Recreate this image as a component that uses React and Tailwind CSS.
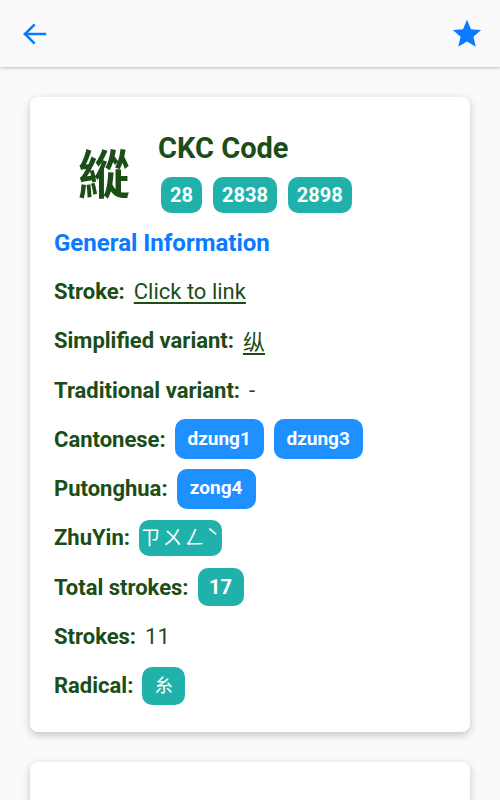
const font = { fontFamily: "Roboto, 'Noto Sans CJK TC', sans-serif" };

function Badge({ children, color = "teal", className = "" }) {
  const bg = color === "blue" ? "bg-[#1e90ff]" : "bg-[#20b2aa]";
  return (
    <span
      className={`inline-flex items-center justify-center whitespace-nowrap rounded-[10px] font-bold text-white ${bg} ${className}`}
    >
      {children}
    </span>
  );
}

function Row({ label, children }) {
  return (
    <div className="flex h-[49.25px] items-center">
      <span className="whitespace-nowrap text-[22px] font-bold text-[#1b4d16]">{label}</span>
      <div className="ml-[9px] flex items-center gap-[10px]">{children}</div>
    </div>
  );
}

export default function App() {
  return (
    <div className="min-h-[800px] bg-[#fafafa]" style={font}>
      <header className="flex h-[67px] items-center justify-between bg-[#fafafa] px-[20px] shadow-[0_1px_3px_rgba(0,0,0,0.25)]">
        <svg width="30" height="30" viewBox="0 0 24 24" fill="none" stroke="#0a7aff" strokeWidth="2" strokeLinecap="square">
          <path d="M20 12H4" />
          <path d="M11 5l-7 7 7 7" />
        </svg>
        <svg width="34" height="34" viewBox="0 0 24 24" fill="#0a7aff" className="-mr-[4px]">
          <path d="M12 17.27L18.18 21l-1.64-7.03L22 9.24l-7.19-.61L12 2 9.19 8.63 2 9.24l5.46 4.73L5.82 21z" />
        </svg>
      </header>

      <main className="px-[30px] pt-[30px]">
        <section className="rounded-[8px] bg-white px-[24px] pb-[22px] pt-[33px] shadow-[0_3px_8px_rgba(0,0,0,0.22)]">
          <div className="flex items-center">
            <div className="flex w-[100px] justify-center">
              <span
                className="text-[52px] font-bold leading-none text-[#1b4d16]"
                style={{ fontFamily: "'Noto Sans CJK TC', sans-serif" }}
              >
                縱
              </span>
            </div>
            <div className="ml-[4px] flex flex-col">
              <h1 className="h-[36px] text-[29px] font-bold leading-[36px] text-[#1b4d16]">CKC Code</h1>
              <div className="ml-[3px] mt-[11px] flex gap-[11px]">
                <Badge className="h-[36px] px-[9px] text-[20px]">28</Badge>
                <Badge className="h-[36px] px-[9px] text-[20px]">2838</Badge>
                <Badge className="h-[36px] px-[9px] text-[20px]">2898</Badge>
              </div>
            </div>
          </div>

          <h2 className="mt-[15px] h-[30px] text-[24px] font-bold leading-[30px] text-[#0a7aff]">
            General Information
          </h2>

          <div className="mt-[9px]">
            <Row label="Stroke:">
              <span className="text-[22px] text-[#1b4d16] underline underline-offset-[3px]">Click to link</span>
            </Row>
            <Row label="Simplified variant:">
              <span
                className="text-[22px] text-[#1b4d16] underline underline-offset-[3px]"
                style={{ fontFamily: "'Noto Sans CJK SC', sans-serif" }}
              >
                纵
              </span>
            </Row>
            <Row label="Traditional variant:">
              <span className="text-[22px] text-[#1b4d16]">-</span>
            </Row>
            <Row label="Cantonese:">
              <Badge color="blue" className="h-[40px] w-[89px] text-[19px]">dzung1</Badge>
              <Badge color="blue" className="h-[40px] w-[89px] text-[19px]">dzung3</Badge>
            </Row>
            <Row label="Putonghua:">
              <Badge color="blue" className="h-[40px] w-[79px] text-[19px]">zong4</Badge>
            </Row>
            <Row label="ZhuYin:">
              <Badge className="h-[36px] w-[83px] text-[20px] tracking-[2px] !font-normal">ㄗㄨㄥˋ</Badge>
            </Row>
            <Row label="Total strokes:">
              <Badge className="h-[38px] w-[46px] text-[20px]">17</Badge>
            </Row>
            <Row label="Strokes:">
              <span className="text-[22px] text-[#1b4d16]">11</span>
            </Row>
            <Row label="Radical:">
              <Badge className="h-[38px] w-[43px] text-[18px] !font-normal">糸</Badge>
            </Row>
          </div>
        </section>

        <section className="mt-[30px] h-[100px] rounded-[8px] bg-white shadow-[0_3px_8px_rgba(0,0,0,0.22)]" />
      </main>
    </div>
  );
}
